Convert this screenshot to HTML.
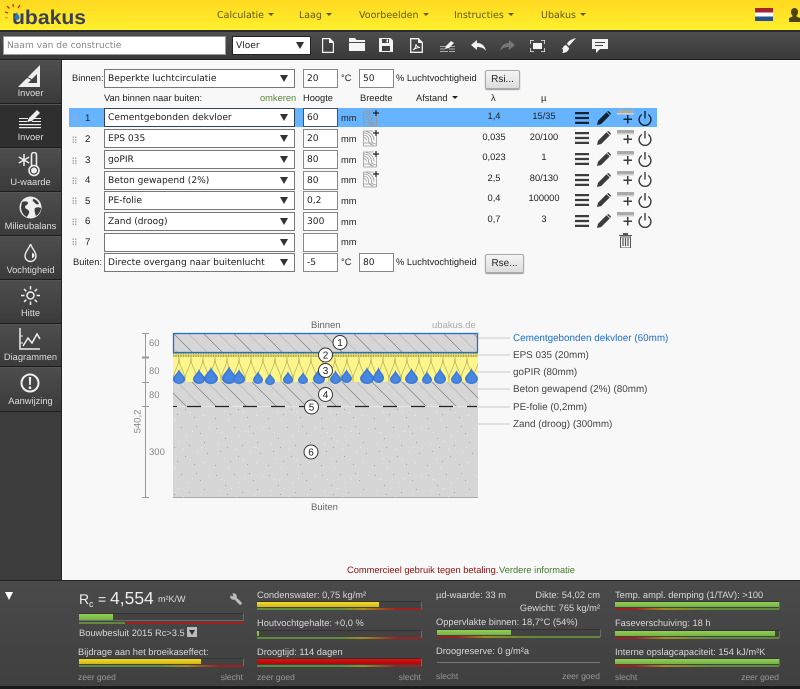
<!DOCTYPE html>
<html><head><meta charset="utf-8"><title>ubakus</title>
<style>
html,body{margin:0;padding:0;width:800px;height:689px;overflow:hidden;background:#f8f8f8}
body{font-family:"Liberation Sans",sans-serif;font-size:9.3px;color:#222;position:relative;text-rendering:geometricPrecision}
div,span,svg{position:absolute;white-space:nowrap}
.nav{top:10px;color:#665a10;font-family:"DejaVu Sans",sans-serif;font-size:9.5px}
.nav i,.c{display:inline-block;position:static;width:0;height:0;border:3px solid transparent;border-top:3px solid currentColor;border-bottom:0;vertical-align:2px;margin-left:4px}
.side{left:0;width:61px;background:linear-gradient(#4d4d4d,#3b3b3b);border-bottom:1px solid #1c1c1c;border-top:1px solid #555;box-sizing:border-box}
.side span{left:0;width:61px;text-align:center;color:#ddd;font-size:9.3px}
.sel{left:104px;width:191px;height:19px;box-sizing:border-box;background:#fff;border:1px solid #777;font:9.1px/18px "DejaVu Sans",sans-serif;padding-left:3px;color:#222}
.sel:after{content:"";position:absolute;right:6px;top:5px;border:4px solid transparent;border-top:7px solid #333;border-bottom:0}
.inp{width:35px;height:19px;box-sizing:border-box;background:#fff;border:1px solid #888;font:9.1px/18px "DejaVu Sans",sans-serif;padding-left:3px}
.num{left:85px;font-size:9.6px}
.grip{left:72px;width:5px;height:7px;background-image:radial-gradient(#aaa .7px,transparent .8px);background-size:2.5px 2.5px}
.u{font-size:9.3px}
.v{width:60px;text-align:center;font-size:9.3px}
.btn{background:linear-gradient(#f4f4f4,#ddd);border:1px solid #aaa;border-radius:2px;box-shadow:0 1px 1px #999;font-size:10px;text-align:center;line-height:17px;box-sizing:border-box;height:19px}
.w{color:#d8d8d8;font-size:9.3px}
.s{color:#999;font-size:8.5px}
.bar{height:6px;background:#424242;border-right:1px solid #6a6a6a;border-bottom:1px solid #6a6a6a;border-top:1px solid #333;margin-top:-1px}
.f{left:0;top:0;height:5px}
.g{background:linear-gradient(#93cf5a,#76b242)}
.y{background:linear-gradient(#f2d92a,#d3b714)}
.r{background:linear-gradient(#e01010,#b00808)}
.ug{height:2px;background:linear-gradient(90deg,#5f8a3e 0,#5f8a3e 50%,#a08a20 65%,#a02020 85%,#a02020 100%)}
.ur{height:2px;background:linear-gradient(90deg,#a02020 0,#a02020 12%,#a08a20 30%,#5f8a3e 60%,#5f8a3e 100%)}
.lab{left:513px;font-size:9.9px;color:#444}
.dim{font-size:9.5px;color:#888}
.ic{fill:#3c3c3c}
.tb{fill:#f4f4f4}
</style></head><body>
<svg width="0" height="0" style="left:0;top:0">
<defs>
<symbol id="ham" viewBox="0 0 14 14"><path d="M0 1h14v2.200H0zM0 5.900h14v2.200H0zM0 10.800h14V13H0z"/></symbol>
<symbol id="pen" viewBox="0 0 14 14"><path d="M0 14l1-4.200L9.500 1.300l3.200 3.200L4.200 13zM10.400.5L11.500 0 14 2.500l-.5 1.100-.3.300-3.100-3.100z"/></symbol>
<symbol id="add" viewBox="0 0 17 15"><path d="M0 0h17v3H0z" fill="#aaa"/><path d="M0 3h17v1.500H0z" fill="#d0d0d0"/><path d="M10 5h1.500v3.500H15V10h-3.500v3.500H10V10H6.500V8.500H10z"/></symbol>
<symbol id="pow" viewBox="0 0 14 15"><path d="M6.300 0h1.400v7.500H6.300zM3.800 2.800v1.600a5.200 5.200 0 1 0 6.400 0V2.800a6.600 6.600 0 1 1-6.400 0z"/></symbol>
<symbol id="wid" viewBox="0 0 16 17"><g fill="none" stroke="#999" stroke-width=".8"><path d="M.5 1h10M.5 16h13M.5 1v15M13.500 6v10"/><path d="M.5 5a5 5 0 0 1 5 6M.5 3a7.500 7.500 0 0 1 8 8M3 1.500a9 9 0 0 1 8 9M.5 7.500a3 3 0 0 1 3 3M.5 13h10M5.500 11c1 3 3 4 5 4M8.500 11c.5 1 2 3 5 3"/></g><path d="M13 0v6M10 3h6" stroke="#222" stroke-width="1.200"/></symbol>
<symbol id="drop" viewBox="0 0 20 28" preserveAspectRatio="none"><path d="M10 0C11.500 7 20 13 20 19A10 9 0 0 1 0 19C0 13 8.500 7 10 0z" fill="#3c78d8"/><path d="M10 5C11 10 17 14 17 19A7 6.500 0 0 1 3 19C3 14 9 10 10 5z" fill="#4787e2"/></symbol>
<pattern id="hatch" width="30" height="30" patternUnits="userSpaceOnUse" x="173" y="333"><path d="M0 0L30 30M-5 25L5 35M25-5L35 5" stroke="#6a6a6a" stroke-width=".6" fill="none"/><path d="M15 0L30 15M0 15L15 30" stroke="#b4b4b4" stroke-width=".6" fill="none"/></pattern>
<pattern id="wool" width="12" height="25" patternUnits="userSpaceOnUse" x="173" y="357"><path d="M0 25C0 12 6 12 6 0C6 12 12 12 12 25" fill="none" stroke="#b8ae58" stroke-width=".7"/></pattern>
<pattern id="eps" width="2.500" height="2.500" patternUnits="userSpaceOnUse"><rect width="2.500" height="2.500" fill="#e8dc70"/><circle cx="1" cy="1" r=".8" fill="#9a9045"/></pattern>
<pattern id="sand" width="53" height="47" patternUnits="userSpaceOnUse"><rect width="53" height="47" fill="#d6d6d6"/><path d="M4 5h1v1H4zM13 15h1v1h-1zM22 4h1v1h-1zM30 22h1v1h-1zM41 10h1v1h-1zM48 30h1v1h-1zM8 28h1v1H8zM18 38h1v1h-1zM35 41h1v1h-1zM26 33h1v1h-1zM45 19h1v1h-1zM3 42h1v1H3zM15 24h1v1h-1zM37 3h1v1h-1z" fill="#a2a2a2"/><path d="M9 9h1v1H9zM27 12h1v1h-1zM19 18h1v1h-1zM38 28h1v1h-1zM50 5h1v1h-1zM12 35h1v1h-1zM31 36h1v1h-1zM44 39h1v1h-1zM6 20h1v1H6zM24 26h1v1h-1zM33 8h1v1h-1zM42 24h1v1h-1zM16 44h1v1h-1z" fill="#ebebeb"/></pattern>
</defs></svg>

<!-- top bar -->
<div style="left:0;top:0;width:800px;height:30px;background:linear-gradient(#ffd91f,#fff02e)"></div>
<div style="left:0;top:30px;width:800px;height:2px;background:#2c2c2c"></div>
<svg style="left:4px;top:3px" width="86" height="24" viewBox="0 0 86 24"><g stroke="#e2231a" stroke-width="1.300" fill="none"><path d="M1 9l3 1M3 3l2.500 2.500M9 1l.5 3M16 2l-2 3"/></g><path d="M1 15l3-.5" stroke="#e8a020" stroke-width="1.300"/><text x="8" y="21" font-family="Liberation Sans,sans-serif" font-size="20" font-weight="bold" fill="#3b3f55" textLength="74" lengthAdjust="spacingAndGlyphs">ubakus</text><path d="M13 9c1 2.500 2.500 4 2.500 5.500a2.500 2.500 0 0 1-5 0C10.500 13 12 11.500 13 9z" fill="#2a78c8"/></svg>
<div class="nav" style="left:217px">Calculatie<i class="c"></i></div>
<div class="nav" style="left:299px">Laag<i class="c"></i></div>
<div class="nav" style="left:359px">Voorbeelden<i class="c"></i></div>
<div class="nav" style="left:454px">Instructies<i class="c"></i></div>
<div class="nav" style="left:541px">Ubakus<i class="c"></i></div>
<div style="left:755px;top:8px;width:18px;height:13px;background:linear-gradient(#a8242c 0 33%,#fff 33% 66%,#26508f 66%)"></div>
<svg style="left:789px;top:8px" width="11" height="14" viewBox="0 0 11 14"><path d="M5.500 0a3.500 3.500 0 0 1 3.500 4c0 2-1 3-1.500 3.500v1L11 10v4H0v-4l3.500-1.500v-1C3 7 2 6 2 4a3.500 3.500 0 0 1 3.500-4z" fill="#4d4412"/></svg>

<!-- toolbar -->
<div style="left:0;top:32px;width:800px;height:28px;background:linear-gradient(#4e4e4e,#393939)"></div>
<div style="left:0;top:59px;width:800px;height:1px;background:#1c1c1c"></div>
<div style="left:3px;top:36px;width:223px;height:19px;box-sizing:border-box;background:#fff;border:1px solid #999;font:9.1px/18px 'DejaVu Sans',sans-serif;color:#888;padding-left:3px">Naam van de constructie</div>
<div class="sel" style="left:232px;top:36px;width:79px;border-color:#222">Vloer</div>
<svg class="tb" style="left:322px;top:38px" width="12" height="15" viewBox="0 0 12 15"><path d="M.5.500h7l4 4v10H.5z" fill="none" stroke="#f4f4f4" stroke-width="1.400"/><path d="M7 0l5 5H7z"/></svg>
<svg class="tb" style="left:349px;top:38px" width="16" height="13" viewBox="0 0 16 13"><path d="M0 0h6l1.500 2H16v2H0zM0 5h16v8H0z"/></svg>
<svg class="tb" style="left:379px;top:38px" width="14" height="14" viewBox="0 0 14 14"><path d="M0 0h11.500L14 2.500V14H0zM3 1v4h7V1zM3 8v5h8V8z" fill-rule="evenodd"/><path d="M7.500 1.500h1.500v3H7.500z"/></svg>
<svg style="left:410px;top:38px" width="13" height="15" viewBox="0 0 13 15"><path d="M.7.700h7.600l4 4v9.600H.7z" fill="none" stroke="#f4f4f4" stroke-width="1.300"/><path d="M8 0l5 5H8z" fill="#f4f4f4"/><path d="M3 12c2-1 3-4 3-6 0 2 1 3 4 3.500-3 0-5 1-7 2.500z" fill="none" stroke="#f4f4f4"/></svg>
<svg class="tb" style="left:440px;top:41px" width="15" height="11" viewBox="0 0 15 11"><path d="M0 5h6v1H0zM0 7.500h5v1H0zM0 10h8v1H0zM9 5h6v1H9zM9 7.500h6v1H9zM9 10h6v1H9z" fill="#aaa"/><path d="M5 8l1-3 5-5 3 2-5 5z"/></svg>
<svg class="tb" style="left:471px;top:40px" width="15" height="11" viewBox="0 0 15 11"><path d="M6 0v3c5 0 8 3 9 8-2-3-5-4-9-4v3L0 5z"/></svg>
<svg style="left:500px;top:40px" width="15" height="11" viewBox="0 0 15 11"><path d="M9 0v3C4 3 1 6 0 11c2-3 5-4 9-4v3l6-5z" fill="#777"/></svg>
<svg style="left:530px;top:40px" width="15" height="12" viewBox="0 0 15 12"><path d="M0 4V0h4M11 0h4v4M15 8v4h-4M4 12H0V8" fill="none" stroke="#f4f4f4" stroke-width="1.500"/><rect x="3" y="3" width="9" height="6" fill="#f4f4f4"/></svg>
<svg class="tb" style="left:561px;top:38px" width="15" height="15" viewBox="0 0 15 15"><path d="M15 0L8 8 6 6c1-3 5-5 9-6zM5 7l3 3c0 3-3 5-7 5 1-1 1-2 1-3s-1-1-1-1 2-4 4-4z"/></svg>
<svg class="tb" style="left:592px;top:39px" width="16" height="14" viewBox="0 0 16 14"><path d="M0 0h16v10H8l-4 4v-4H0z"/><path d="M3 3h10v1H3zM3 6h8v1H3z" fill="#444"/></svg>

<!-- sidebar -->
<div style="left:0;top:60px;width:62px;height:521px;background:#3c3c3c;border-right:1px solid #222;box-sizing:border-box"></div>
<div class="side" style="top:60px;height:44px"><span style="top:27px">Invoer</span>
<svg style="left:18px;top:3px" width="24" height="24" viewBox="0 0 24 24"><path d="M22 1v22H0zM19 10L10 19h9z" fill="#eee" fill-rule="evenodd"/><path d="M7 14a7 7 0 0 1 8 4" stroke="#3c3c3c" fill="none"/></svg></div>
<div class="side" style="top:104px;height:44px;background:#2f2f2f"><span style="top:27px">Invoer</span>
<svg style="left:18px;top:4px" width="24" height="20" viewBox="0 0 24 20"><path d="M1 9h9v1H1zM1 12h8v1H1zM1 15h22v1.200H1zM1 18h22v1.200H1zM14 9h9v1h-9zM14 12h9v1h-9z" fill="#eee"/><path d="M9 13l2-4 8-8 3 3-8 8z" fill="#eee"/></svg></div>
<div class="side" style="top:148px;height:44px"><span style="top:28px">U-waarde</span>
<svg style="left:17px;top:3px" width="28" height="25" viewBox="0 0 28 25"><path d="M7 2v12M1.800 5l10.400 6M1.800 11l10.400-6" stroke="#eee" stroke-width="1.500"/><circle cx="17" cy="18.500" r="5" fill="none" stroke="#eee" stroke-width="1.600"/><path d="M14.500 15V3a2.500 2.500 0 0 1 5 0v12" fill="none" stroke="#eee" stroke-width="1.600"/><circle cx="17" cy="18.500" r="3" fill="#eee"/></svg></div>
<div class="side" style="top:192px;height:44px"><span style="top:28px">Milieubalans</span>
<svg style="left:19px;top:3px" width="23" height="23" viewBox="0 0 23 23"><circle cx="11.500" cy="11.500" r="11" fill="#eee"/><path d="M3 6c3-1 6-1 6 1s-3 2-3 4 3 2 4 4-2 5-2 6c-3-1-6-5-6-10zM14 3c2 0 5 2 6 5-2 1-3 0-4-1s-3-2-2-4zM16 12c2-1 4-1 6 0 0 3-2 6-5 8-1-2-2-6-1-8z" fill="#3c3c3c"/></svg></div>
<div class="side" style="top:236px;height:44px"><span style="top:28px">Vochtigheid</span>
<svg style="left:24px;top:6px" width="13" height="20" viewBox="0 0 13 20"><path d="M6.500 1C7.500 5 12 8.500 12 13a5.500 5.500 0 0 1-11 0C1 8.500 5.500 5 6.500 1z" fill="none" stroke="#eee" stroke-width="1.400"/><path d="M8 15a2.500 2.500 0 0 0 0-5z" fill="#eee"/></svg></div>
<div class="side" style="top:280px;height:44px"><span style="top:27px">Hitte</span>
<svg style="left:21px;top:5px" width="19" height="19" viewBox="0 0 19 19"><circle cx="9.500" cy="9.500" r="3.500" fill="none" stroke="#eee" stroke-width="1.500"/><path d="M9.500 0v3.500M9.500 15.500V19M0 9.500h3.500M15.500 9.500H19M3 3l2.300 2.300M13.700 13.700L16 16M16 3l-2.300 2.300M5.300 13.700L3 16" stroke="#eee" stroke-width="1.500"/></svg></div>
<div class="side" style="top:324px;height:43px"><span style="top:27px">Diagrammen</span>
<svg style="left:19px;top:3px" width="22" height="22" viewBox="0 0 22 22"><path d="M1 0v21h20" fill="none" stroke="#eee" stroke-width="1.500"/><path d="M1 8h3M1 15l3 0" stroke="#eee"/><path d="M4 18l5-8 4 5 5-9 3 5" fill="none" stroke="#eee" stroke-width="1.500"/></svg></div>
<div class="side" style="top:367px;height:45px"><span style="top:28px">Aanwijzing</span>
<svg style="left:20px;top:5px" width="20" height="20" viewBox="0 0 20 20"><circle cx="10" cy="10" r="8.500" fill="none" stroke="#eee" stroke-width="2"/><path d="M8.800 4h2.400l-.4 8H9.200zM8.800 13.500h2.400V16H8.800z" fill="#eee"/></svg></div>

<!-- header rows -->
<div style="left:72px;top:73px">Binnen:</div>
<div class="sel" style="top:69px">Beperkte luchtcirculatie</div>
<div class="inp" style="left:303px;top:69px">20</div><div class="u" style="left:341px;top:73px">°C</div>
<div class="inp" style="left:359px;top:69px">50</div><div class="u" style="left:396px;top:73px">% Luchtvochtigheid</div>
<div class="btn" style="left:485px;top:70px;width:35px">Rsi...</div>
<div style="left:104px;top:93px">Van binnen naar buiten:</div>
<div style="left:260px;top:93px;color:#5a8a3c">omkeren</div>
<div style="left:303px;top:93px">Hoogte</div>
<div style="left:360px;top:93px">Breedte</div>
<div style="left:416px;top:93px">Afstand<i class="c"></i></div>
<div style="left:491px;top:93px">λ</div>
<div style="left:541px;top:93px">µ</div>

<!-- selected row -->
<div style="left:69px;top:108px;width:588px;height:19px;background:#66b3ff"></div>

<!-- rows -->
<div class="grip" style="top:115px"></div><div class="num" style="top:113px">1</div><div class="sel" style="top:108px;border-color:#345">Cementgebonden dekvloer</div><div class="inp" style="left:303px;top:108px;border-color:#456">60</div><div class="u" style="left:341px;top:113px">mm</div><svg style="left:363px;top:110px" width="16" height="17"><use href="#wid"/></svg><div class="v" style="left:464px;top:111px">1,4</div><div class="v" style="left:514px;top:111px">15/35</div>
<svg style="left:575px;top:111px;fill:#123" width="14" height="14"><use href="#ham"/></svg><svg style="left:597px;top:111px;fill:#123" width="14" height="14"><use href="#pen"/></svg><svg style="left:617px;top:110px;fill:#123" width="17" height="15"><use href="#add"/></svg><svg style="left:638px;top:111px;fill:#123" width="14" height="15"><use href="#pow"/></svg>

<div class="grip" style="top:136px"></div><div class="num" style="top:134px">2</div><div class="sel" style="top:129px">EPS 035</div><div class="inp" style="left:303px;top:129px">20</div><div class="u" style="left:341px;top:134px">mm</div><svg style="left:363px;top:130px" width="16" height="17"><use href="#wid"/></svg><div class="v" style="left:464px;top:132px">0,035</div><div class="v" style="left:514px;top:132px">20/100</div>
<svg class="ic" style="left:575px;top:131px" width="14" height="14"><use href="#ham"/></svg><svg class="ic" style="left:597px;top:131px" width="14" height="14"><use href="#pen"/></svg><svg class="ic" style="left:617px;top:130px" width="17" height="15"><use href="#add"/></svg><svg class="ic" style="left:638px;top:131px" width="14" height="15"><use href="#pow"/></svg>

<div class="grip" style="top:157px"></div><div class="num" style="top:155px">3</div><div class="sel" style="top:150px">goPIR</div><div class="inp" style="left:303px;top:150px">80</div><div class="u" style="left:341px;top:155px">mm</div><svg style="left:363px;top:151px" width="16" height="17"><use href="#wid"/></svg><div class="v" style="left:464px;top:152px">0,023</div><div class="v" style="left:514px;top:152px">1</div>
<svg class="ic" style="left:575px;top:152px" width="14" height="14"><use href="#ham"/></svg><svg class="ic" style="left:597px;top:152px" width="14" height="14"><use href="#pen"/></svg><svg class="ic" style="left:617px;top:151px" width="17" height="15"><use href="#add"/></svg><svg class="ic" style="left:638px;top:152px" width="14" height="15"><use href="#pow"/></svg>

<div class="grip" style="top:177px"></div><div class="num" style="top:175px">4</div><div class="sel" style="top:171px">Beton gewapend (2%)</div><div class="inp" style="left:303px;top:171px">80</div><div class="u" style="left:341px;top:175px">mm</div><svg style="left:363px;top:171px" width="16" height="17"><use href="#wid"/></svg><div class="v" style="left:464px;top:173px">2,5</div><div class="v" style="left:514px;top:173px">80/130</div>
<svg class="ic" style="left:575px;top:173px" width="14" height="14"><use href="#ham"/></svg><svg class="ic" style="left:597px;top:173px" width="14" height="14"><use href="#pen"/></svg><svg class="ic" style="left:617px;top:171px" width="17" height="15"><use href="#add"/></svg><svg class="ic" style="left:638px;top:172px" width="14" height="15"><use href="#pow"/></svg>

<div class="grip" style="top:197px"></div><div class="num" style="top:196px">5</div><div class="sel" style="top:191px">PE-folie</div><div class="inp" style="left:303px;top:191px">0,2</div><div class="u" style="left:341px;top:196px">mm</div><div class="v" style="left:464px;top:193px">0,4</div><div class="v" style="left:514px;top:193px">100000</div>
<svg class="ic" style="left:575px;top:193px" width="14" height="14"><use href="#ham"/></svg><svg class="ic" style="left:597px;top:193px" width="14" height="14"><use href="#pen"/></svg><svg class="ic" style="left:617px;top:192px" width="17" height="15"><use href="#add"/></svg><svg class="ic" style="left:638px;top:193px" width="14" height="15"><use href="#pow"/></svg>

<div class="grip" style="top:218px"></div><div class="num" style="top:216px">6</div><div class="sel" style="top:212px">Zand (droog)</div><div class="inp" style="left:303px;top:212px">300</div><div class="u" style="left:341px;top:217px">mm</div><div class="v" style="left:464px;top:214px">0,7</div><div class="v" style="left:514px;top:214px">3</div>
<svg class="ic" style="left:575px;top:214px" width="14" height="14"><use href="#ham"/></svg><svg class="ic" style="left:597px;top:214px" width="14" height="14"><use href="#pen"/></svg><svg class="ic" style="left:617px;top:212px" width="17" height="15"><use href="#add"/></svg><svg class="ic" style="left:638px;top:213px" width="14" height="15"><use href="#pow"/></svg>

<div class="grip" style="top:238px"></div><div class="num" style="top:237px">7</div><div class="sel" style="top:233px"></div><div class="inp" style="left:303px;top:233px"></div><div class="u" style="left:341px;top:237px">mm</div>
<svg style="left:619px;top:233px" width="13" height="15" viewBox="0 0 13 15"><path d="M0 2h13v1H0zM4 0h5v2H4z" fill="#555"/><path d="M1.500 4h10v11h-10z" fill="none" stroke="#555"/><path d="M4 5v8M6.500 5v8M9 5v8" stroke="#555" stroke-width="1.200"/></svg>

<div style="left:73px;top:257px">Buiten:</div>
<div class="sel" style="top:253px">Directe overgang naar buitenlucht</div>
<div class="inp" style="left:303px;top:253px">-5</div><div class="u" style="left:341px;top:257px">°C</div>
<div class="inp" style="left:359px;top:253px">80</div><div class="u" style="left:396px;top:257px">% Luchtvochtigheid</div>
<div class="btn" style="left:485px;top:254px;width:39px">Rse...</div>

<!-- diagram -->
<svg style="left:125px;top:315px" width="400" height="200" viewBox="125 315 400 200">
<rect x="173" y="333" width="305" height="19.500" fill="#d6d6d6"/><rect x="173" y="333" width="305" height="19.500" fill="url(#hatch)"/>
<rect x="173" y="352" width="305" height="5.500" fill="url(#eps)"/>
<rect x="173" y="357" width="305" height="25.500" fill="#fbf58c"/><rect x="173" y="357" width="305" height="25.500" fill="url(#wool)"/>
<rect x="173" y="382" width="305" height="24.500" fill="#d6d6d6"/><rect x="173" y="382" width="305" height="24.500" fill="url(#hatch)"/>
<rect x="173" y="407" width="305" height="90" fill="url(#sand)"/>
<path d="M187 406.500h290" stroke="#222" stroke-width="1.200" stroke-dasharray="14 14"/>
<path d="M173 406.500h4" stroke="#222"/>
<rect x="173.500" y="333.500" width="304" height="19" fill="none" stroke="#1d6fd0" stroke-width="1.300"/>
<path d="M173 497.500h305" stroke="#aaa"/>
<use href="#drop" x="173" y="369" width="12" height="15"/><use href="#drop" x="193" y="369" width="12" height="15"/><use href="#drop" x="204" y="367" width="14" height="17"/><use href="#drop" x="222" y="366" width="14" height="18"/><use href="#drop" x="233" y="369" width="12" height="15"/><use href="#drop" x="253" y="371" width="10" height="13"/><use href="#drop" x="265" y="373" width="10" height="12"/><use href="#drop" x="283" y="371" width="10" height="13"/><use href="#drop" x="298" y="372" width="10" height="12"/><use href="#drop" x="313" y="368" width="12" height="16"/><use href="#drop" x="330" y="370" width="11" height="14"/><use href="#drop" x="341" y="369" width="11" height="14"/><use href="#drop" x="360" y="367" width="14" height="17"/><use href="#drop" x="373" y="367" width="11" height="16"/><use href="#drop" x="390" y="370" width="11" height="14"/><use href="#drop" x="405" y="368" width="13" height="16"/><use href="#drop" x="422" y="371" width="10" height="13"/><use href="#drop" x="434" y="368" width="12" height="16"/><use href="#drop" x="451" y="370" width="11" height="14"/><use href="#drop" x="465" y="368" width="13" height="16"/>
<g stroke="#999" fill="none"><path d="M142 333.500h7M145.500 333.500V497.500M142 357h7M142 358h7M142 382.500h7M142 406.500h7M142 497.500h7"/></g>
<g fill="none" stroke="#bbb" stroke-width=".8"><path d="M478 338h32M478 355h32M478 372h32M478 389h32M478 407h32M478 424h32"/></g>
<g fill="#fff" stroke="#333"><circle cx="340" cy="342.500" r="7"/><circle cx="325.500" cy="355" r="7"/><circle cx="325.500" cy="370.500" r="7"/><circle cx="325.500" cy="394.500" r="7"/><circle cx="311.500" cy="407" r="7"/><circle cx="311" cy="452" r="7"/></g>
<g font-family="Liberation Sans,sans-serif" font-size="10" text-anchor="middle" fill="#222"><text x="340" y="346">1</text><text x="325.500" y="358.500">2</text><text x="325.500" y="374">3</text><text x="325.500" y="398">4</text><text x="311.500" y="410.500">5</text><text x="311" y="455.500">6</text></g>
</svg>
<div class="dim" style="left:311px;top:320px;color:#666">Binnen</div>
<div class="dim" style="left:311px;top:502px;color:#666">Buiten</div>
<div class="dim" style="left:432px;top:320px;color:#aaa">ubakus.de</div>
<div class="dim" style="left:149px;top:338px">60</div>
<div class="dim" style="left:149px;top:366px">80</div>
<div class="dim" style="left:149px;top:390px">80</div>
<div class="dim" style="left:149px;top:447px">300</div>
<div class="dim" style="left:123px;top:416px;transform:rotate(-90deg);width:30px;text-align:center">540,2</div>
<div class="lab" style="top:333px;color:#1d6fd0">Cementgebonden dekvloer (60mm)</div>
<div class="lab" style="top:350px">EPS 035 (20mm)</div>
<div class="lab" style="top:367px">goPIR (80mm)</div>
<div class="lab" style="top:384px">Beton gewapend (2%) (80mm)</div>
<div class="lab" style="top:402px">PE-folie (0,2mm)</div>
<div class="lab" style="top:419px">Zand (droog) (300mm)</div>
<div style="left:347px;top:565px;color:#8b1010">Commercieel gebruik tegen betaling.</div>
<div style="left:499px;top:565px;color:#3f7a2a">Verdere informatie</div>

<!-- bottom panel -->
<div style="left:0;top:580px;width:800px;height:109px;background:linear-gradient(#4a4a4a,#3f3f3f);border-top:1px solid #222;box-sizing:border-box"></div>
<div style="left:0;top:686px;width:800px;height:3px;background:#1a1a1a"></div>
<div style="left:5px;top:592px;border:4.500px solid transparent;border-top:8px solid #fff;border-bottom:0"></div>

<div style="left:79px;top:591px;color:#eee;font-size:14px">R</div>
<div style="left:89px;top:599px;color:#eee;font-size:9px">c</div>
<div style="left:98px;top:591px;color:#eee;font-size:14px">=</div>
<div style="left:110px;top:588px;color:#eee;font-size:17.500px">4,554</div>
<div style="left:158px;top:594px;color:#ddd;font-size:9px">m²K/W</div>
<svg style="left:230px;top:593px" width="12" height="12" viewBox="0 0 12 12"><path d="M3.500 3.500L10.300 10.300" stroke="#bbb" stroke-width="3" stroke-linecap="round"/><circle cx="3.500" cy="3.500" r="3.300" fill="#bbb"/><path d="M3.500 3.500L-.5 2 2-.5z" fill="#484848"/></svg>
<div class="bar" style="left:79px;top:614px;width:164px;height:6px"><div class="f g" style="width:34px;height:6px"></div></div>
<div style="left:79px;top:622px;width:164px;height:2px;background:linear-gradient(90deg,#5f8a3e 0 28%,#a02020 28%)"></div>
<div class="w" style="left:79px;top:628px">Bouwbesluit 2015 Rc&gt;3.5</div>
<div style="left:187px;top:627px;width:10px;height:10px;background:#bbb"></div><div style="left:189px;top:630px;border:3px solid transparent;border-top:5px solid #333;border-bottom:0"></div>
<div class="w" style="left:78px;top:647px">Bijdrage aan het broeikaseffect:</div>
<div class="bar" style="left:79px;top:659px;width:164px"><div class="f y" style="width:122px"></div></div>
<div class="ug" style="left:79px;top:665px;width:164px"></div>
<div class="s" style="left:78px;top:672px">zeer goed</div><div class="s" style="left:183px;top:672px;width:60px;text-align:right">slecht</div>

<div class="w" style="left:257px;top:590px">Condenswater: 0,75 kg/m²</div>
<div class="bar" style="left:257px;top:602px;width:164px"><div class="f y" style="width:122px"></div></div><div class="ug" style="left:257px;top:608px;width:164px"></div>
<div class="w" style="left:257px;top:618px">Houtvochtgehalte: +0,0 %</div>
<div class="bar" style="left:257px;top:631px;width:164px"><div class="f g" style="width:2px"></div></div><div class="ug" style="left:257px;top:637px;width:164px"></div>
<div class="w" style="left:257px;top:647px">Droogtijd: 114 dagen</div>
<div class="bar" style="left:257px;top:659px;width:164px"><div class="f r" style="width:164px"></div></div><div class="ug" style="left:257px;top:665px;width:164px"></div>
<div class="s" style="left:257px;top:672px">zeer goed</div><div class="s" style="left:361px;top:672px;width:60px;text-align:right">slecht</div>

<div class="w" style="left:436px;top:590px">µd-waarde: 33 m</div>
<div class="w" style="left:500px;top:590px;width:100px;text-align:right">Dikte: 54,02 cm</div>
<div class="w" style="left:500px;top:603px;width:100px;text-align:right">Gewicht: 765 kg/m²</div>
<div class="w" style="left:436px;top:617px">Oppervlakte binnen: 18,7°C (54%)</div>
<div class="bar" style="left:437px;top:630px;width:163px"><div class="f g" style="width:74px"></div></div><div class="ur" style="left:437px;top:636px;width:163px"></div>
<div class="w" style="left:436px;top:646px">Droogreserve: 0 g/m²a</div>
<div style="left:437px;top:662px;width:163px;height:1px;background:#777"></div>
<div class="s" style="left:436px;top:671px">slecht</div><div class="s" style="left:540px;top:671px;width:60px;text-align:right">zeer goed</div>

<div class="w" style="left:615px;top:590px">Temp. ampl. demping (1/TAV): &gt;100</div>
<div class="bar" style="left:615px;top:602px;width:164px"><div class="f g" style="width:164px"></div></div><div class="ur" style="left:615px;top:608px;width:164px"></div>
<div class="w" style="left:615px;top:618px">Faseverschuiving: 18 h</div>
<div class="bar" style="left:615px;top:631px;width:164px"><div class="f g" style="width:160px"></div></div><div class="ur" style="left:615px;top:637px;width:164px"></div>
<div class="w" style="left:615px;top:647px">Interne opslagcapaciteit: 154 kJ/m²K</div>
<div class="bar" style="left:615px;top:659px;width:164px"><div class="f g" style="width:164px"></div></div><div class="ur" style="left:615px;top:665px;width:164px"></div>
<div class="s" style="left:615px;top:672px">slecht</div><div class="s" style="left:719px;top:672px;width:60px;text-align:right">zeer goed</div>
</body></html>
